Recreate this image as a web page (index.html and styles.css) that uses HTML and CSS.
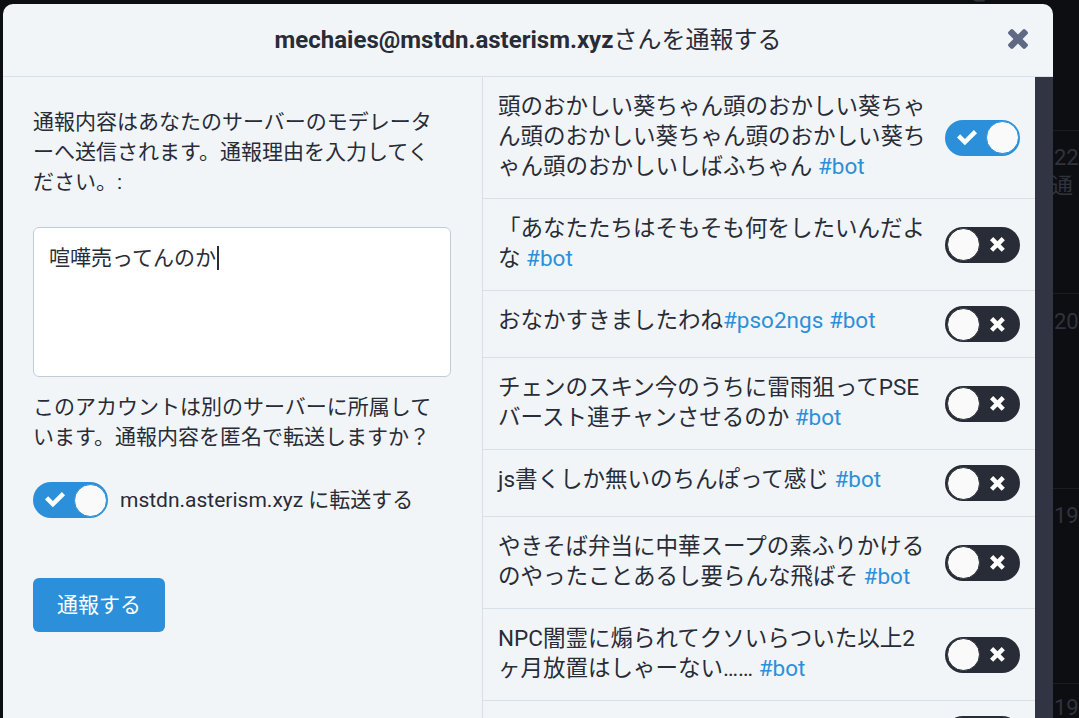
FILE: index.html
```html
<!DOCTYPE html>
<html lang="ja">
<head>
<meta charset="utf-8">
<title>通報</title>
<link rel="stylesheet" href="styles.css">
</head>
<body>
  <div class="backdrop">
    <div class="bg-column">
      <div class="bg-row bg-row-1"><div class="bg-top-text">Yukari Next 0.0.0.219を</div></div>
      <div class="bg-row bg-row-2"><div class="bg-date">22日</div><div class="bg-line">を通</div></div>
      <div class="bg-row bg-row-3"><div class="bg-date">20日</div></div>
      <div class="bg-row bg-row-4"><div class="bg-date">19日</div></div>
      <div class="bg-row bg-row-5"><div class="bg-date">19日</div></div>
    </div>
  </div>

  <div class="modal">
    <div class="modal-header">
      <div class="modal-title"><strong>mechaies@mstdn.asterism.xyz</strong>さんを通報する</div>
      <svg class="close" viewBox="302 366 1188 1188" aria-label="閉じる"><path fill="#606984" d="M1490 1322q0 40-28 68l-136 136q-28 28-68 28t-68-28l-294-294-294 294q-28 28-68 28t-68-28l-136-136q-28-28-28-68t28-68l294-294-294-294q-28-28-28-68t28-68l136-136q28-28 68-28t68 28l294 294 294-294q28-28 68-28t68 28l136 136q28 28 28 68t-28 68l-294 294 294 294q28 28 28 68z"/></svg>
    </div>
    <div class="modal-body">
      <div class="comment">
        <p class="comment-text">通報内容はあなたのサーバーのモデレーターへ送信されます。通報理由を入力してください。:</p>
        <div class="textarea">喧嘩売ってんのか<span class="caret"></span></div>
        <p class="comment-text">このアカウントは別のサーバーに所属しています。通報内容を匿名で転送しますか？</p>
        <div class="forward">
          <span class="toggle on">
            <svg class="toggle-check" viewBox="0 0 14 11"><path d="M11.264 0L5.26 6.004 2.103 2.847 0 4.95l5.26 5.26 8.108-8.107L11.264 0" fill="#fff"/></svg>
            <span class="toggle-thumb"></span>
          </span>
          <span class="forward-label">mstdn.asterism.xyz に転送する</span>
        </div>
        <button class="button">通報する</button>
      </div>

      <div class="statuses">
        <div class="status-row">
          <div class="status-text">頭のおかしい葵ちゃん頭のおかしい葵ちゃん頭のおかしい葵ちゃん頭のおかしい葵ちゃん頭のおかしいしばふちゃん <a class="tag">#bot</a></div>
          <span class="toggle on">
            <svg class="toggle-check" viewBox="0 0 14 11"><path d="M11.264 0L5.26 6.004 2.103 2.847 0 4.95l5.26 5.26 8.108-8.107L11.264 0" fill="#fff"/></svg>
            <span class="toggle-thumb"></span>
          </span>
        </div>
        <div class="status-row">
          <div class="status-text">「あなたたちはそもそも何をしたいんだよな <a class="tag">#bot</a></div>
          <span class="toggle">
            <svg class="toggle-x" viewBox="0 0 10 10"><path d="M9.9 2.12L7.78 0 4.95 2.828 2.12 0 0 2.12l2.83 2.83L0 7.776 2.123 9.9 4.95 7.07 7.78 9.9 9.9 7.776 7.07 4.95 9.9 2.12" fill="#fff"/></svg>
            <span class="toggle-thumb"></span>
          </span>
        </div>
        <div class="status-row">
          <div class="status-text">おなかすきましたわね<a class="tag">#pso2ngs</a> <a class="tag">#bot</a></div>
          <span class="toggle">
            <svg class="toggle-x" viewBox="0 0 10 10"><path d="M9.9 2.12L7.78 0 4.95 2.828 2.12 0 0 2.12l2.83 2.83L0 7.776 2.123 9.9 4.95 7.07 7.78 9.9 9.9 7.776 7.07 4.95 9.9 2.12" fill="#fff"/></svg>
            <span class="toggle-thumb"></span>
          </span>
        </div>
        <div class="status-row">
          <div class="status-text">チェンのスキン今のうちに雷雨狙ってPSEバースト連チャンさせるのか <a class="tag">#bot</a></div>
          <span class="toggle">
            <svg class="toggle-x" viewBox="0 0 10 10"><path d="M9.9 2.12L7.78 0 4.95 2.828 2.12 0 0 2.12l2.83 2.83L0 7.776 2.123 9.9 4.95 7.07 7.78 9.9 9.9 7.776 7.07 4.95 9.9 2.12" fill="#fff"/></svg>
            <span class="toggle-thumb"></span>
          </span>
        </div>
        <div class="status-row">
          <div class="status-text">js書くしか無いのちんぽって感じ <a class="tag">#bot</a></div>
          <span class="toggle">
            <svg class="toggle-x" viewBox="0 0 10 10"><path d="M9.9 2.12L7.78 0 4.95 2.828 2.12 0 0 2.12l2.83 2.83L0 7.776 2.123 9.9 4.95 7.07 7.78 9.9 9.9 7.776 7.07 4.95 9.9 2.12" fill="#fff"/></svg>
            <span class="toggle-thumb"></span>
          </span>
        </div>
        <div class="status-row">
          <div class="status-text">やきそば弁当に中華スープの素ふりかけるのやったことあるし要らんな飛ばそ <a class="tag">#bot</a></div>
          <span class="toggle">
            <svg class="toggle-x" viewBox="0 0 10 10"><path d="M9.9 2.12L7.78 0 4.95 2.828 2.12 0 0 2.12l2.83 2.83L0 7.776 2.123 9.9 4.95 7.07 7.78 9.9 9.9 7.776 7.07 4.95 9.9 2.12" fill="#fff"/></svg>
            <span class="toggle-thumb"></span>
          </span>
        </div>
        <div class="status-row">
          <div class="status-text">NPC闇霊に煽られてクソいらついた以上2ヶ月放置はしゃーない…… <a class="tag">#bot</a></div>
          <span class="toggle">
            <svg class="toggle-x" viewBox="0 0 10 10"><path d="M9.9 2.12L7.78 0 4.95 2.828 2.12 0 0 2.12l2.83 2.83L0 7.776 2.123 9.9 4.95 7.07 7.78 9.9 9.9 7.776 7.07 4.95 9.9 2.12" fill="#fff"/></svg>
            <span class="toggle-thumb"></span>
          </span>
        </div>
        <div class="status-row">
          <div class="status-text">ー・ひとりごと <a class="tag">#bot</a></div>
          <span class="toggle">
            <svg class="toggle-x" viewBox="0 0 10 10"><path d="M9.9 2.12L7.78 0 4.95 2.828 2.12 0 0 2.12l2.83 2.83L0 7.776 2.123 9.9 4.95 7.07 7.78 9.9 9.9 7.776 7.07 4.95 9.9 2.12" fill="#fff"/></svg>
            <span class="toggle-thumb"></span>
          </span>
        </div>
      </div>

      <div class="scroll-track"></div>
    </div>
  </div>
</body>
</html>
```

FILE: styles.css
```css
* {
  box-sizing: border-box;
}

html,
body {
  margin: 0;
  height: 100%;
}

body {
  position: relative;
  overflow: hidden;
  background: #0d0e12;
  font-family: Roboto, "Noto Sans CJK JP", sans-serif;
  text-spacing-trim: space-all;
}

/* ---------- underlying page (dimmed) ---------- */
.backdrop {
  display: flex;
  justify-content: flex-end;
  height: 718px;
  overflow: hidden;
}

.bg-column {
  width: 379px;
  color: #30333d;
  font-size: 22px;
  line-height: 28px;
  white-space: nowrap;
}

.bg-row {
  border-bottom: 1px solid #1a1c22;
  overflow: hidden;
}

.bg-row-1 { height: 131px; }
.bg-row-2 { height: 163px; padding-top: 13px; }
.bg-row-3 { height: 195px; padding-top: 14px; }
.bg-row-4 { height: 195px; padding-top: 13px; }
.bg-row-5 { height: 120px; padding-top: 10px; }

.bg-top-text {
  margin-top: -21px;
  padding-left: 58px;
}

.bg-date {
  padding-left: 354px;
}

.bg-line {
  padding-left: 329px;
}

/* ---------- modal ---------- */
.modal {
  position: absolute;
  left: 3px;
  top: 4px;
  width: 1050px;
  height: 760px;
  display: flex;
  flex-direction: column;
  background: #f2f5f7;
  border-radius: 10px 10px 0 0;
  overflow: hidden;
  color: #282c37;
}

.modal-header {
  position: relative;
  flex: none;
  height: 73px;
  border-bottom: 1px solid #d9e1e8;
  display: flex;
  align-items: center;
  justify-content: center;
}

.modal-title {
  font-size: 24px;
  line-height: 30px;
  color: #282c37;
}

.modal-title strong {
  font-weight: 700;
}

.close {
  position: absolute;
  right: 25px;
  top: 25px;
  width: 20px;
  height: 20px;
}

.modal-body {
  flex: 1;
  display: flex;
  min-height: 0;
}

/* ---------- left: comment ---------- */
.comment {
  width: 479px;
  flex: none;
  padding: 30px 31px 30px 30px;
}

.comment-text {
  margin: 0 0 30px;
  padding-right: 13px;
  font-size: 21px;
  line-height: 30px;
  line-break: loose;
}

.textarea {
  width: 418px;
  height: 150px;
  margin-bottom: 15px;
  padding: 15px;
  background: #ffffff;
  border: 1px solid #c0cdd9;
  border-radius: 6px;
  font-size: 21px;
  line-height: 30px;
  color: #282c37;
}

.caret {
  display: inline-block;
  width: 2px;
  height: 24px;
  margin-left: 1px;
  vertical-align: -5px;
  background: #282c37;
}

.forward {
  display: flex;
  align-items: center;
  gap: 12px;
}

.forward-label {
  font-size: 21px;
  line-height: 30px;
}

.button {
  display: block;
  margin-top: 60px;
  height: 54px;
  padding: 0 24px;
  border: none;
  border-radius: 6px;
  background: #2b90d9;
  color: #ffffff;
  font-family: Roboto, "Noto Sans CJK JP", sans-serif;
  font-size: 21px;
  line-height: 54px;
}

/* ---------- right: statuses ---------- */
.statuses {
  width: 553px;
  flex: none;
  border-left: 1px solid #d9e1e8;
}

.status-row {
  display: flex;
  align-items: center;
  padding-left: 15px;
  border-bottom: 1px solid #d9e1e8;
}

.status-text {
  flex: 1;
  align-self: flex-start;
  min-width: 0;
  padding: 14px 0 17px;
  font-size: 22.5px;
  line-height: 30px;
  color: #282c37;
  line-break: loose;
}

.tag {
  color: #2b90d9;
  text-decoration: none;
}

.scroll-track {
  flex: 1;
  background: #313543;
}

/* ---------- toggle ---------- */
.toggle {
  position: relative;
  flex: none;
  display: inline-block;
  width: 75px;
  height: 36px;
  margin: 15px;
  border-radius: 18px;
  background: #282c37;
}

.forward .toggle {
  margin: 0;
}

.toggle.on {
  background: #2b90d9;
}

.toggle-thumb {
  position: absolute;
  top: 1.5px;
  left: 1.5px;
  width: 33px;
  height: 33px;
  border-radius: 50%;
  background: #fafafa;
  border: 1.5px solid #282c37;
}

.toggle.on .toggle-thumb {
  left: 40.5px;
  border-color: #2b90d9;
}

.toggle-check {
  position: absolute;
  left: 12px;
  top: 10px;
  width: 21px;
  height: 16.5px;
}

.toggle-x {
  position: absolute;
  right: 15px;
  top: 10.5px;
  width: 15px;
  height: 15px;
}
```
